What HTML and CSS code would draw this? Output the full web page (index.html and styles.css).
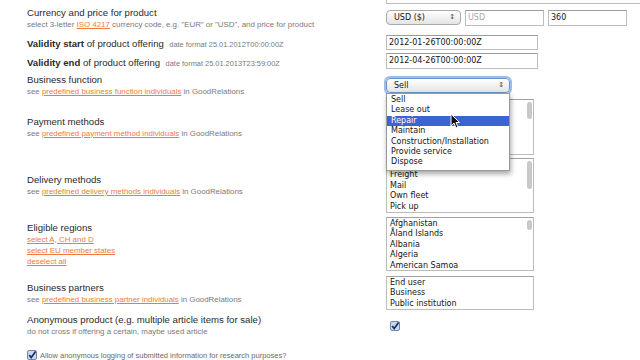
FILE: index.html
```html
<!DOCTYPE html>
<html lang="en">
<head>
    <meta charset="UTF-8">
    <title>Product offering</title>
    <link rel="stylesheet" href="styles.css">
</head>
<body>
    <form class="offer">
        <div class="row row-top">
            <div></div>
            <div class="field field-wide"></div>
        </div>

        <div class="row row-currency">
            <div class="label">
                <div class="title">Currency and price for product</div>
                <div class="hint">select 3-letter <a href="#">ISO 4217</a> currency code, e.g. "EUR" or "USD", and price for product</div>
            </div>
            <div class="controls">
                <div class="select select-currency"><span>USD ($)</span><span class="arrows">&#8597;</span></div>
                <div class="field field-short muted">USD</div>
                <div class="field field-short">360</div>
            </div>
        </div>

        <div class="row row-start">
            <div class="label inline">
                <span class="title"><b>Validity start</b> of product offering</span>
                <span class="hint">date format 25.01.2012T00:00:00Z</span>
            </div>
            <div class="field field-date">2012-01-26T00:00:00Z</div>
        </div>

        <div class="row row-end">
            <div class="label inline">
                <span class="title"><b>Validity end</b> of product offering</span>
                <span class="hint">date format 25.01.2013T23:59:00Z</span>
            </div>
            <div class="field field-date">2012-04-26T00:00:00Z</div>
        </div>

        <div class="row row-function">
            <div class="label">
                <div class="title">Business function</div>
                <div class="hint">see <a href="#">predefined business function individuals</a> in GoodRelations</div>
            </div>
            <div class="menu-wrap">
                <div class="select select-focus"><span>Sell</span><span class="arrows">&#8597;</span></div>
                <ul class="dropdown">
                    <li>Sell</li>
                    <li>Lease out</li>
                    <li class="active">Repair</li>
                    <li>Maintain</li>
                    <li>Construction/Installation</li>
                    <li>Provide service</li>
                    <li>Dispose</li>
                </ul>
                <svg class="cursor" width="10" height="16" viewBox="0 0 10 16">
                    <path d="M1 1 L1 13 L4 10 L6 15 L8 14 L6 9.5 L9.5 9.5 Z" fill="#111" stroke="#fff" stroke-width="1"/>
                </svg>
            </div>
        </div>

        <div class="row row-payment">
            <div class="label">
                <div class="title">Payment methods</div>
                <div class="hint">see <a href="#">predefined payment method individuals</a> in GoodRelations</div>
            </div>
            <ul class="listbox">
                <li class="thumb thumb-payment"></li>
            </ul>
        </div>

        <div class="row row-delivery">
            <div class="label">
                <div class="title">Delivery methods</div>
                <div class="hint">see <a href="#">predefined delivery methods individuals</a> in GoodRelations</div>
            </div>
            <ul class="listbox">
                <li>Direct Download</li>
                <li>Freight</li>
                <li>Mail</li>
                <li>Own fleet</li>
                <li>Pick up</li>
                <li class="thumb thumb-delivery"></li>
            </ul>
        </div>

        <div class="row row-regions">
            <div class="label">
                <div class="title">Eligible regions</div>
                <div class="hint"><a href="#">select A, CH and D</a></div>
                <div class="hint"><a href="#">select EU member states</a></div>
                <div class="hint"><a href="#">deselect all</a></div>
            </div>
            <ul class="listbox">
                <li>Afghanistan</li>
                <li>Åland Islands</li>
                <li>Albania</li>
                <li>Algeria</li>
                <li>American Samoa</li>
                <li class="thumb thumb-regions"></li>
            </ul>
        </div>

        <div class="row row-partners">
            <div class="label">
                <div class="title">Business partners</div>
                <div class="hint">see <a href="#">predefined business partner individuals</a> in GoodRelations</div>
            </div>
            <ul class="listbox">
                <li>End user</li>
                <li>Business</li>
                <li>Public institution</li>
            </ul>
        </div>

        <div class="row row-anon">
            <div class="label">
                <div class="title">Anonymous product (e.g. multiple article items for sale)</div>
                <div class="hint">do not cross if offering a certain, maybe used article</div>
            </div>
            <div class="check-cell">
                <svg class="check" width="10" height="10" viewBox="0 0 10 10">
                    <rect x="0.5" y="0.5" width="9" height="9" rx="1.5" fill="#c9d9f0" stroke="#7388ad"/>
                    <path d="M2.2 5 L4.2 7.6 L8.6 1.6" fill="none" stroke="#1d2c63" stroke-width="1.7"/>
                </svg>
            </div>
        </div>

        <div class="consent">
            <svg class="check" width="10" height="10" viewBox="0 0 10 10">
                <rect x="0.5" y="0.5" width="9" height="9" rx="1.5" fill="#c9d9f0" stroke="#7388ad"/>
                <path d="M2.2 5 L4.2 7.6 L8.6 1.6" fill="none" stroke="#1d2c63" stroke-width="1.7"/>
            </svg>
            <span>Allow anonymous logging of submitted information for research purposes?</span>
        </div>
    </form>
</body>
</html>
```

FILE: styles.css
```css
body {
    margin: 0;
    background: #fff;
    font-family: "Liberation Sans", Arial, sans-serif;
    color: #2a2a2a;
    overflow: hidden;
}
.offer {
    padding-left: 27px;
    display: flex;
    flex-direction: column;
}
.row {
    display: grid;
    grid-template-columns: 359px auto;
    align-items: center;
}
.row-top { height: 15px; margin-top: -12px; }
.row-currency { height: 30px; }
.row-start { height: 17px; }
.row-end { height: 22px; }
.row-function { height: 27px; }
.row-payment { height: 56px; }
.row-delivery { height: 55px; margin-top: 3px; }
.row-regions { height: 54px; margin-top: 4px; }
.row-partners { height: 34px; margin-top: 5px; }
.row-anon { height: 30px; }

.title {
    font-size: 9.6px;
    line-height: 12px;
    color: #2a2a2a;
}
.title b {
    font-weight: bold;
}
.hint {
    font-size: 7.9px;
    line-height: 11px;
    color: #7a7a7a;
}
.hint a {
    color: #ee7a3c;
}
.label.inline .hint {
    font-size: 7.4px;
    margin-left: 1px;
}

/* form controls */
.controls {
    display: flex;
    gap: 4px;
}
.field, .select, .listbox, .dropdown {
    font-family: "DejaVu Sans", sans-serif;
    font-size: 8px;
    color: #151515;
}
.field {
    box-sizing: border-box;
    height: 16px;
    line-height: 14px;
    padding: 0 2px;
    border: 1px solid #bdbdbd;
    border-top-color: #9c9c9c;
    background: #fff;
}
.field-wide { width: 270px; }
.field-short { width: 79px; }
.field-date { width: 152px; height: 15px; line-height: 13px; }
.row-end .field-date { height: 16px; line-height: 14px; }
.muted { color: #a9a9a9; }

.select {
    box-sizing: border-box;
    height: 15px;
    line-height: 13px;
    padding: 0 5px 0 7px;
    border: 1px solid #a8a8a8;
    border-radius: 4px;
    background: linear-gradient(#ffffff, #e4e4e4);
    display: flex;
    justify-content: space-between;
}
.select-currency { width: 75px; }
.arrows {
    font-size: 7px;
    color: #444;
}
.menu-wrap {
    position: relative;
    width: 124px;
}
.select-focus {
    border-color: #6d93c8;
    box-shadow: 0 0 0 2px #9cbde8;
}
.dropdown {
    position: absolute;
    z-index: 2;
    top: 15px;
    left: 0;
    width: 124px;
    box-sizing: border-box;
    margin: 0;
    padding: 1px 0 2px;
    list-style: none;
    background: #fff;
    border: 1px solid #9a9a9a;
    box-shadow: 1px 3px 5px rgba(0, 0, 0, 0.35);
}
.dropdown li {
    line-height: 10.4px;
    padding-left: 4px;
}
.dropdown li.active {
    background: #3d62d2;
    color: #fff;
}
.cursor {
    position: absolute;
    z-index: 3;
    left: 64px;
    top: 35px;
}

.listbox {
    position: relative;
    box-sizing: border-box;
    width: 148px;
    height: 100%;
    margin: 0;
    padding: 1px 3px;
    list-style: none;
    overflow: hidden;
    border: 1px solid #bcbcbc;
    border-top-color: #a2a2a2;
}
.listbox li {
    line-height: 10.4px;
}
.listbox li.thumb {
    position: absolute;
    right: 1px;
    top: 2px;
    width: 5px;
    border-radius: 3px;
    background: #c9c9c9;
}
.thumb-payment { height: 17px; }
.thumb-delivery { height: 28px; }
.thumb-regions { height: 10px; }

.check-cell {
    padding-left: 4px;
    padding-top: 1px;
}
.check {
    display: block;
}
.consent {
    height: 30px;
    display: flex;
    align-items: center;
    gap: 3px;
    font-size: 7.5px;
    color: #6a6a6a;
}
```
